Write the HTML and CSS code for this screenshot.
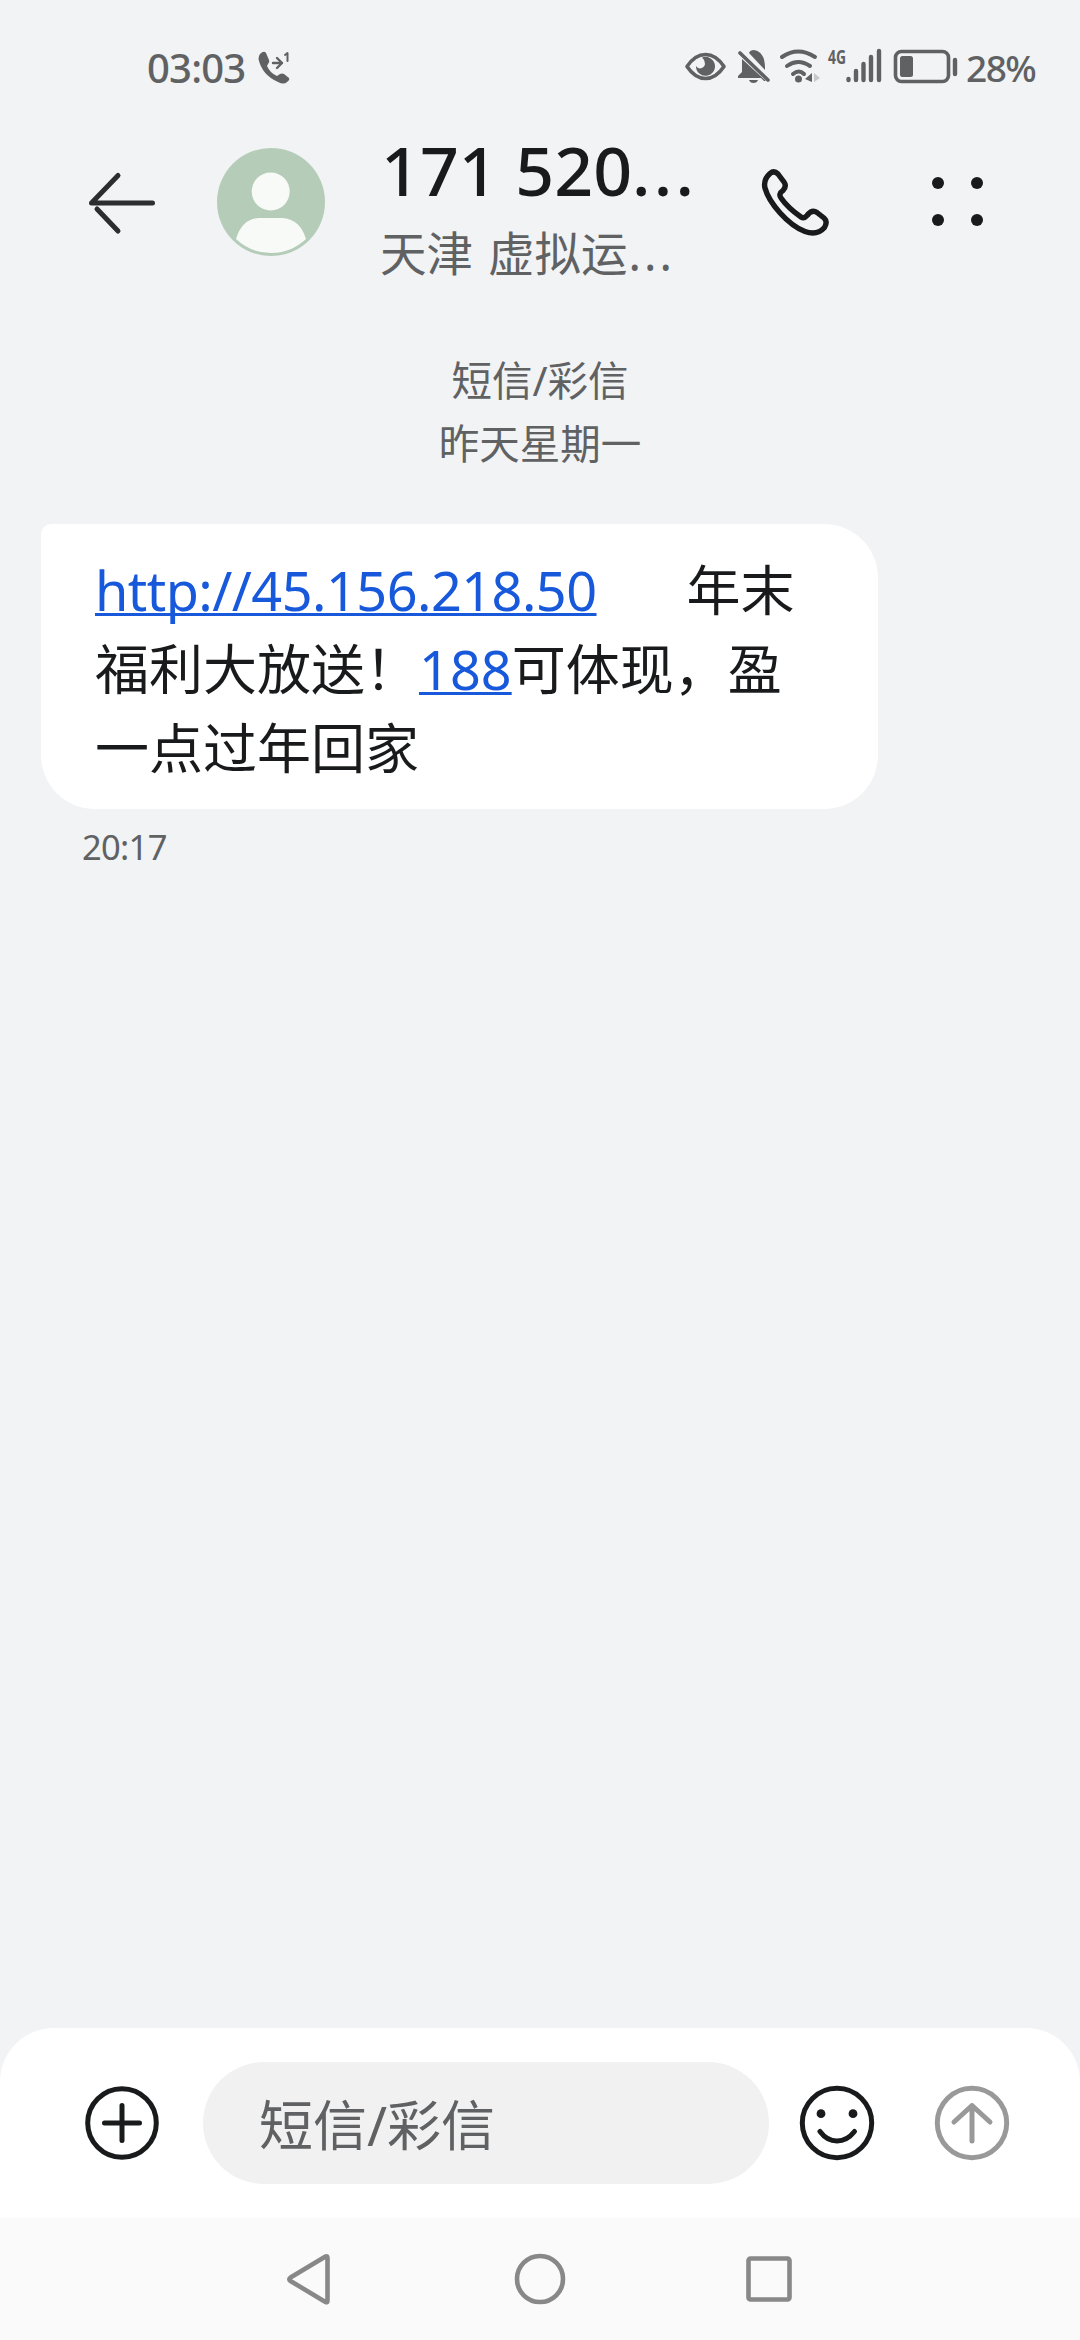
FILE: index.html
```
<!DOCTYPE html>
<html lang="zh-CN">
<head>
<meta charset="utf-8">
<title>短信/彩信</title>
<link rel="stylesheet" href="styles.css">
</head>
<body>
<div class="screen">
  <div class="status">
    <span class="clock">03:03</span>
    <svg class="call-forward" width="34" height="36" viewBox="256 50 34 36">
      <path class="fill" d="M260 54q4-4 6-1l3 7q1 2-1 4l-1 2q3 7 10 10l3-2q2-1 4 0l5 4q1 2-2 4-3 3-9 0Q262 75 258.500 59q0-3 1.500-5z"/>
      <path class="line thin" d="M273 63h9m-5-5 5 5-5 5"/>
      <path class="line tiny" d="M285 55l2.500-2v8"/>
    </svg>
    <div class="status-icons">
      <svg class="indicators" width="201" height="60" viewBox="682 30 201 60">
        <path class="line" d="M686 66.500q8-12 18.500-12t18.500 12q-8 12-18.500 12t-18.500-12z"/>
        <path class="fill" d="M701 57.500a9.500 9.500 0 1 1-6 8.500q2 3.500 6 2 4-2 2.500-6.500-.5-2-2.500-4z"/>
        <path class="fill" d="M741 59l24 22h-2l-3-3h-23v-2l4-4zM748 53q1-3 5-3 11 2 11 18v2zM748 80h9q-1 3-4.500 3t-4.500-3z"/>
        <path class="line" d="M739 53l28 27"/>
        <path class="line wave" d="M781 57q16-11 33 0M786 66q11-8 23 0M792 74q6-5 11 0"/>
        <circle class="fill" cx="797.500" cy="79" r="3.500"/>
        <path class="fill" d="M804 79l7-6v9z"/>
        <path class="faint" d="M813 73l6 5-6 4z"/>
        <text class="network" x="827" y="64" textLength="18" lengthAdjust="spacingAndGlyphs">4G</text>
        <path class="line bar" d="M847.500 80v-1M855 80v-9M862.500 80V64M870 80V57M878 80V51"/>
      </svg>
      <svg class="battery" width="65" height="36" viewBox="892 49 65 36">
        <rect class="line cell" x="894.500" y="51.500" width="53" height="30" rx="6"/>
        <rect class="fill" x="899" y="56" width="13" height="21" rx="2.500"/>
        <path class="line bar" d="M954 60v14"/>
      </svg>
      <span class="percent">28%</span>
    </div>
  </div>

  <header class="header">
    <svg class="back" width="76" height="70" viewBox="84 168 76 70">
      <path d="M152.500 203H91.500L118 175.500M97 209l21 22"/>
    </svg>
    <svg class="avatar" width="108" height="108" viewBox="217 148 108 108">
      <circle class="avatar-bg" cx="271" cy="202" r="54"/>
      <circle class="avatar-fg" cx="270.700" cy="191.500" r="19"/>
      <path class="avatar-fg" d="M236 239q6-20 23-21h23q18 1 24 21-15 14-35 14t-35-14z"/>
    </svg>
    <div class="contact">
      <div class="number">171 520<span class="dots">...</span></div>
      <div class="place">天津 虚拟运<span class="dots">...</span></div>
    </div>
    <svg class="call" width="72" height="72" viewBox="758 166 72 72">
      <path d="M769 173.500Q773 170 777 174L783 182Q786 186 782 190.500Q777 194 780 198Q787 208 800 217Q803 219 806 215.500Q811 209 816 212.500L823 218Q827 221.500 823.500 227.500Q816 236 804 231.500C787 225 768 203 764 188Q762 180 769 173.500z"/>
    </svg>
    <svg class="more" width="54" height="52" viewBox="930 175 54 52">
      <circle cx="938" cy="183" r="6"/><circle cx="977" cy="183" r="6"/>
      <circle cx="938" cy="220" r="6"/><circle cx="977" cy="220" r="6"/>
    </svg>
  </header>

  <main class="thread">
    <div class="day">短信/彩信<br>昨天星期一</div>
    <div class="bubble"><a class="url">http://45.156.218.50</a><span class="gap"></span>年末<br>福利大放送！<a>188</a>可体现，盈<br>一点过年回家</div>
    <div class="sent-at">20:17</div>
  </main>

  <footer class="composer">
    <svg class="tool" width="76" height="76" viewBox="-38 -38 76 76">
      <circle r="34.300"/><path d="M0-17.500v35M-17.500 0h35"/>
    </svg>
    <div class="input">短信/彩信</div>
    <svg class="tool smile" width="76" height="76" viewBox="-38 -38 76 76">
      <circle r="34.700"/>
      <circle class="eye" cx="-16" cy="-9.300" r="4.400"/><circle class="eye" cx="16" cy="-9.300" r="4.400"/>
      <path d="M-17 8.500q7 9.500 17 9.500t17.500-9.500"/>
    </svg>
    <svg class="tool send" width="76" height="76" viewBox="-38 -38 76 76">
      <circle r="34.700"/><path d="M0 18V-17.500M-18-1 0-17.500 18-1"/>
    </svg>
  </footer>

  <nav class="nav">
    <svg width="60" height="60" viewBox="280 2249 60 60"><path d="M325.500 2256.500q2-1 2 1.500v42.500q0 2.500-2 1.500l-35-21q-2.500-1.700 0-3.500z"/></svg>
    <svg width="60" height="60" viewBox="510 2249 60 60"><circle cx="540" cy="2279" r="23"/></svg>
    <svg width="60" height="60" viewBox="739 2249 60 60"><rect x="748.500" y="2258.500" width="41" height="41" rx="2"/></svg>
  </nav>
</div>
</body>
</html>
```

FILE: styles.css
```
* { box-sizing: border-box; }
body {
  margin: 0;
  background: #f1f3f5;
  color: #191a1b;
  font-family: "Noto Sans", "Noto Sans CJK SC", sans-serif;
}
svg { display: block; flex: none; }
.screen {
  width: 1080px;
  height: 2340px;
  display: flex;
  flex-direction: column;
  overflow: hidden;
}

/* Status bar */
.status {
  height: 120px;
  padding: 30px 44px 0 147px;
  display: flex;
  align-items: flex-start;
  color: #606163;
  font-weight: 500;
}
.clock { width: 109px; margin-top: 16px; font-size: 40px; line-height: 44px; letter-spacing: -0.8px; }
.call-forward { margin-top: 20px; }
.status-icons { margin-left: auto; display: flex; align-items: flex-start; }
.battery { margin: 19px 0 0 9px; }
.percent { width: 70px; margin: 16px 0 0 8px; font-size: 37px; line-height: 44px; letter-spacing: -1.5px; }
.fill { fill: #606163; }
.faint { fill: #c6c8c9; }
.line { fill: none; stroke: #606163; stroke-width: 3.6; stroke-linecap: round; stroke-linejoin: round; }
.thin { stroke-width: 2.4; }
.tiny { stroke-width: 2; }
.wave { stroke-width: 4; }
.bar { stroke-width: 4.4; }
.cell { stroke-width: 3.6; }
.network { fill: #606163; font: 700 20px "Noto Sans", sans-serif; }

/* Conversation header */
.header {
  height: 200px;
  padding-left: 84px;
  display: flex;
  align-items: flex-start;
}
.back { margin-top: 48px; }
.back path { fill: none; stroke: #2b2d2f; stroke-width: 5; stroke-linecap: round; stroke-linejoin: round; }
.avatar { margin: 28px 0 0 57px; }
.avatar-bg { fill: #b5cdb8; }
.avatar-fg { fill: #f8faf8; }
.contact { width: 320px; margin-left: 55px; padding-top: 1px; white-space: nowrap; }
.number { height: 97px; padding-left: 1px; font-size: 68px; line-height: 98px; font-weight: 500; }
.number .dots { letter-spacing: 3.2px; }
.place { font-size: 46.5px; line-height: 70px; color: #606163; word-spacing: 3px; }
.place .dots { margin-left: 1px; letter-spacing: 3px; }
.call { margin: 46px 0 0 59px; }
.call path { fill: none; stroke: #191a1b; stroke-width: 5.4; stroke-linejoin: round; }
.more { margin: 55px 0 0 99px; fill: #191a1b; }

/* Messages */
.thread { flex: 1; padding-left: 41px; }
.day {
  margin: 29px 41px 0 0;
  text-align: center;
  font-size: 40.5px;
  line-height: 63px;
  color: #606163;
}
.bubble {
  width: 837px;
  height: 285px;
  margin-top: 49px;
  padding: 27px 0 0 54px;
  border-radius: 10px 54px 54px 54px;
  background: #fff;
  font-size: 54px;
  line-height: 79px;
  white-space: nowrap;
}
.bubble a {
  color: #1859dc;
  text-decoration: underline;
  text-decoration-thickness: 3px;
  text-underline-offset: 2px;
  text-decoration-skip-ink: none;
}
.url { letter-spacing: -0.55px; }
.gap { display: inline-block; width: 90px; }
.sent-at {
  padding-left: 41px;
  margin-top: 13px;
  font-size: 34.5px;
  line-height: 50px;
  letter-spacing: -0.7px;
  color: #606163;
}

/* Composer */
.composer {
  height: 190px;
  padding: 34px 70px 0 84px;
  border-radius: 54px 54px 0 0;
  background: #fff;
  display: flex;
}
.tool { margin-top: 23px; fill: none; stroke: #191a1b; stroke-width: 5; stroke-linecap: round; stroke-linejoin: round; }
.input {
  width: 566px;
  height: 122px;
  margin-left: 43px;
  padding-left: 56px;
  border-radius: 61px;
  background: #f1f1f1;
  color: #606163;
  font-size: 54px;
  line-height: 126px;
}
.smile { margin-left: 30px; }
.eye { fill: #191a1b; stroke: none; }
.send { margin-left: 59px; stroke: #999; }

/* System navigation */
.nav {
  height: 122px;
  padding: 31px 281px 0 280px;
  background: #fafafa;
  display: flex;
  justify-content: space-between;
}
.nav svg { fill: none; stroke: #888; stroke-width: 4.6; stroke-linejoin: round; }
```
